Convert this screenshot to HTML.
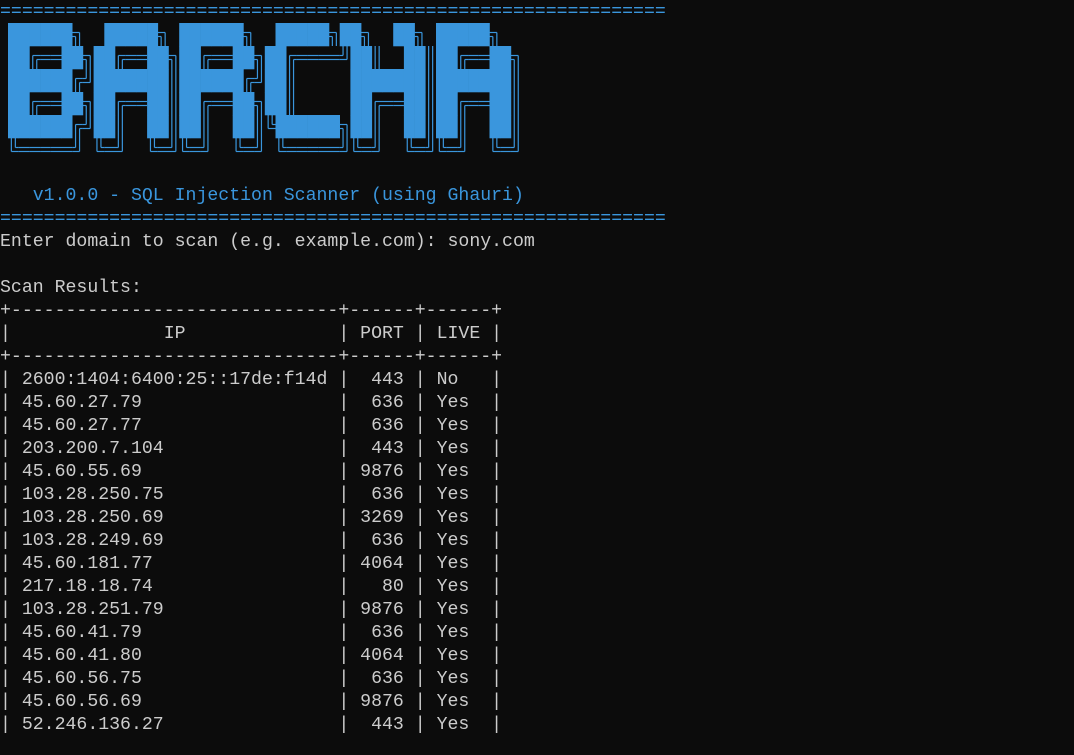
<!DOCTYPE html>
<html><head><meta charset="utf-8"><style>
html,body{margin:0;padding:0;background:#0c0c0c;width:1074px;height:755px;overflow:hidden}
pre{position:absolute;left:0;top:0.5px;margin:0;font-family:"Liberation Mono","DejaVu Sans Mono",monospace;font-size:18.2px;line-height:23px;color:#cccccc;white-space:pre}
.b{color:#3a96dd}
svg{position:absolute;left:0;top:0}
</style></head><body>
<pre><span class="b">=============================================================</span>







<span class="b">   v1.0.0 - SQL Injection Scanner (using Ghauri)</span>
<span class="b">=============================================================</span>
Enter domain to scan (e.g. example.com): sony.com

Scan Results:
+------------------------------+------+------+
|              IP              | PORT | LIVE |
+------------------------------+------+------+
| 2600:1404:6400:25::17de:f14d |  443 | No   |
| 45.60.27.79                  |  636 | Yes  |
| 45.60.27.77                  |  636 | Yes  |
| 203.200.7.104                |  443 | Yes  |
| 45.60.55.69                  | 9876 | Yes  |
| 103.28.250.75                |  636 | Yes  |
| 103.28.250.69                | 3269 | Yes  |
| 103.28.249.69                |  636 | Yes  |
| 45.60.181.77                 | 4064 | Yes  |
| 217.18.18.74                 |   80 | Yes  |
| 103.28.251.79                | 9876 | Yes  |
| 45.60.41.79                  |  636 | Yes  |
| 45.60.41.80                  | 4064 | Yes  |
| 45.60.56.75                  |  636 | Yes  |
| 45.60.56.69                  | 9876 | Yes  |
| 52.246.136.27                |  443 | Yes  |</pre>
<svg id="logo" width="600" height="170" xmlns="http://www.w3.org/2000/svg"></svg>
<script>
var rows=[
"██████╗  █████╗ ██████╗  █████╗██╗  ██╗ █████╗ ",
"██╔══██╗██╔══██╗██╔══██╗██╔════╝██║  ██║██╔══██╗",
"██████╔╝███████║██████╔╝██║     ███████║███████║",
"██╔══██╗██╔══██║██╔══██╗██║     ██╔══██║██╔══██║",
"██████╔╝██║  ██║██║  ██║╚██████╗██║  ██║██║  ██║",
"╚═════╝ ╚═╝  ╚═╝╚═╝  ╚═╝ ╚═════╝╚═╝  ╚═╝╚═╝  ╚═╝"];
var W=10.7,H=23,OX=8,OY=23,d=2,col="#3a96dd",s="";
function L(x1,y1,x2,y2){s+='<line x1="'+x1+'" y1="'+y1+'" x2="'+x2+'" y2="'+y2+'"/>';}
var blocks="";
for(var r=0;r<rows.length;r++){var t=Array.from(rows[r]);for(var c=0;c<t.length;c++){
var ch=t[c],x0=OX+c*W,y0=OY+r*H,x1=x0+W,y1=y0+H,cx=x0+W/2,cy=y0+H/2;
if(ch=="█"){blocks+='<rect x="'+x0+'" y="'+y0+'" width="'+(W+0.3)+'" height="'+(H+0.3)+'"/>';}
else if(ch=="═"){L(x0,cy-d,x1,cy-d);L(x0,cy+d,x1,cy+d);}
else if(ch=="║"){L(cx-d,y0,cx-d,y1);L(cx+d,y0,cx+d,y1);}
else if(ch=="╗"){L(x0,cy-d,cx+d,cy-d);L(x0,cy+d,cx-d,cy+d);L(cx+d,cy-d,cx+d,y1);L(cx-d,cy+d,cx-d,y1);}
else if(ch=="╔"){L(cx-d,cy-d,x1,cy-d);L(cx+d,cy+d,x1,cy+d);L(cx-d,cy-d,cx-d,y1);L(cx+d,cy+d,cx+d,y1);}
else if(ch=="╝"){L(x0,cy+d,cx+d,cy+d);L(x0,cy-d,cx-d,cy-d);L(cx+d,y0,cx+d,cy+d);L(cx-d,y0,cx-d,cy-d);}
else if(ch=="╚"){L(cx-d,cy+d,x1,cy+d);L(cx+d,cy-d,x1,cy-d);L(cx-d,y0,cx-d,cy+d);L(cx+d,y0,cx+d,cy-d);}
}}
document.getElementById("logo").innerHTML='<g stroke="'+col+'" stroke-width="1.2" fill="none">'+s+'</g><g fill="'+col+'">'+blocks+'</g>';
</script>
</body></html>
